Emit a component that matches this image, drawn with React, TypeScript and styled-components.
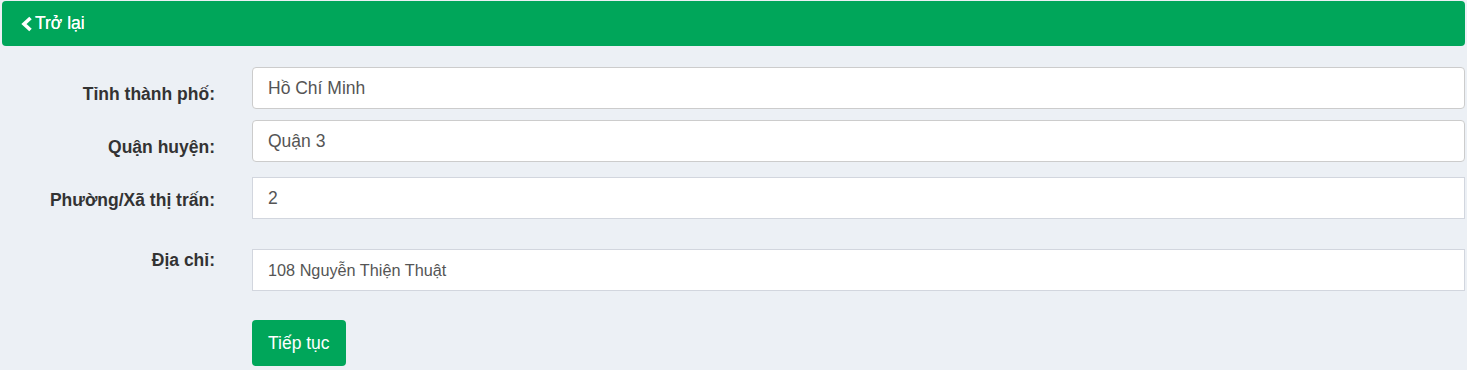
import React from "react";
import styled, { createGlobalStyle } from "styled-components";

const GlobalStyle = createGlobalStyle`
  body {
    margin: 0;
    background-color: #ecf0f5;
    font-family: "Liberation Sans", Arial, sans-serif;
  }
`;

const Page = styled.div`
  display: flex;
  flex-direction: column;
  padding: 1px 2px 0;
`;

const TopBar = styled.div`
  display: flex;
  align-items: center;
  height: 45px;
  padding-left: 17px;
  background-color: #00a65a;
  border-radius: 4px;
`;

const BackLink = styled.a`
  display: flex;
  align-items: center;
  gap: 1px;
  color: #fff;
  font-size: 17.5px;
  text-decoration: none;
  cursor: pointer;
  text-shadow: 0 0 0.4px #fff;

  svg {
    flex-shrink: 0;
  }
`;

const Form = styled.form`
  display: flex;
  flex-direction: column;
  padding-top: 21px;
`;

const Row = styled.div<{ $gap: number }>`
  display: grid;
  grid-template-columns: 213px 1fr;
  column-gap: 37px;
  margin-top: ${(p) => p.$gap}px;
`;

const Label = styled.label<{ $top: number }>`
  padding-top: ${(p) => p.$top}px;
  text-align: right;
  font-size: 17.5px;
  line-height: 20px;
  font-weight: bold;
  color: #333;
`;

const Field = styled.input<{ $rounded?: boolean; $small?: boolean }>`
  box-sizing: border-box;
  width: 100%;
  height: 42px;
  padding: 0 15px;
  border: 1px solid ${(p) => (p.$rounded ? "#ccc" : "#d2d6de")};
  border-radius: ${(p) => (p.$rounded ? 4 : 0)}px;
  background: #fff;
  color: #555;
  font-family: "Liberation Sans", Arial, sans-serif;
  font-size: ${(p) => (p.$small ? 16.25 : 17.5)}px;
  outline: none;
`;

const Submit = styled.button`
  height: 46px;
  padding: 0 16px;
  border: none;
  border-radius: 4px;
  background-color: #00a65a;
  color: #fff;
  font-family: "Liberation Sans", Arial, sans-serif;
  font-size: 17.5px;
  cursor: pointer;
`;

const Chevron = () => (
  <svg width="15" height="16" viewBox="0 0 15 16">
    <polyline
      points="11.5,2 5,8 11.5,14"
      fill="none"
      stroke="#fff"
      strokeWidth="3.6"
      strokeLinecap="butt"
      strokeLinejoin="miter"
    />
  </svg>
);

export default function App() {
  return (
    <>
      <GlobalStyle />
      <Page>
        <TopBar>
          <BackLink>
            <Chevron />
            Trở lại
          </BackLink>
        </TopBar>
        <Form onSubmit={(e) => e.preventDefault()}>
          <Row $gap={0}>
            <Label $top={17}>Tỉnh thành phố:</Label>
            <Field $rounded defaultValue="Hồ Chí Minh" />
          </Row>
          <Row $gap={11}>
            <Label $top={17}>Quận huyện:</Label>
            <Field $rounded defaultValue="Quận 3" />
          </Row>
          <Row $gap={15}>
            <Label $top={13}>Phường/Xã thị trấn:</Label>
            <Field defaultValue="2" />
          </Row>
          <Row $gap={30}>
            <Label $top={1}>Địa chỉ:</Label>
            <Field $small defaultValue="108 Nguyễn Thiện Thuật" />
          </Row>
          <Row $gap={29}>
            <span />
            <div>
              <Submit type="submit">Tiếp tục</Submit>
            </div>
          </Row>
        </Form>
      </Page>
    </>
  );
}
